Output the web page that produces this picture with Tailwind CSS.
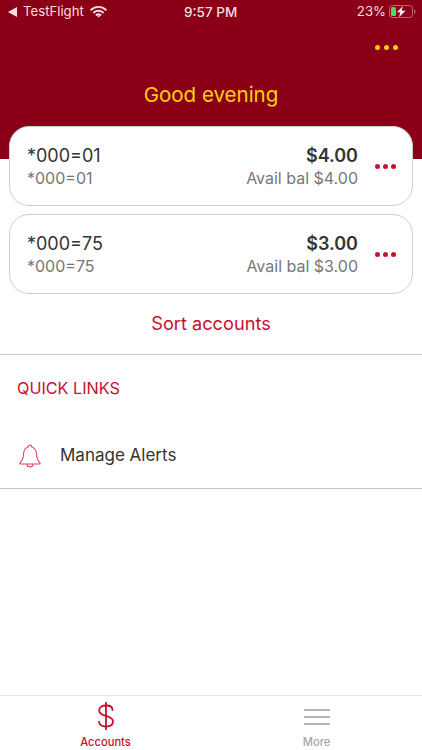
<!DOCTYPE html>
<html lang="en">

<head>
    <meta charset="UTF-8">
    <meta name="viewport" content="width=device-width, initial-scale=1.0">
    <title>Accounts</title>
    <script src="https://cdn.jsdelivr.net/npm/@tailwindcss/browser@4"></script>
</head>

<body class="bg-white font-['Inter',sans-serif]">
    <div class="w-[422px] h-[750px] flex flex-col overflow-hidden bg-white">
        <!-- Header -->
        <div class="h-[159px] shrink-0 bg-[#8b0016]">
            <!-- Status bar -->
            <div class="h-[24px] pl-[8px] pr-[6px] flex items-center justify-between relative text-[13.2px] text-[#f4dfe2]">
                <div class="flex items-center">
                    <svg width="9" height="10" viewBox="0 0 9 10" class="mr-[6px]"><path d="M0 5 L9 0 V10 Z" fill="#f4dfe2"/></svg>
                    <span>TestFlight</span>
                    <svg width="17" height="13" viewBox="0 0 18 13" class="ml-[6px]" fill="none" stroke="#f4dfe2" stroke-width="2.1" stroke-linecap="round">
                        <path d="M1.3 4.6 C5.6 0.6 12.4 0.6 16.7 4.6"/>
                        <path d="M4.2 7.5 C6.9 5.2 11.1 5.2 13.8 7.5"/>
                        <path d="M7 10.1 C8.2 9.3 9.8 9.3 11 10.1"/>
                        <circle cx="9" cy="11.6" r="0.6" fill="#f4dfe2" stroke-width="1"/>
                    </svg>
                </div>
                <span class="absolute left-[184px] font-medium text-[13.5px]">9:57 PM</span>
                <div class="flex items-center">
                    <span class="mr-[3px]">23%</span>
                    <svg width="27" height="13" viewBox="0 0 27 13">
                        <rect x="0.5" y="0.5" width="23" height="12" rx="3" fill="none" stroke="#f4dfe2" stroke-opacity="0.45"/>
                        <rect x="2" y="2" width="5" height="9" rx="1.5" fill="#4cd964"/>
                        <path d="M25 4.5 C26 4.8 26.5 5.5 26.5 6.5 C26.5 7.5 26 8.2 25 8.5 Z" fill="#f4dfe2" fill-opacity="0.45"/>
                        <path d="M14.5 0 L7.5 7.6 H11 L9.5 13 L17 5.4 H12.8 Z" fill="#fff" stroke="#8b0016" stroke-width="0.5"/>
                    </svg>
                </div>
            </div>

            <div class="h-[20px] mt-[13px] pr-[24px] flex items-center justify-end gap-[4px]">
                <span class="w-[5px] h-[5px] rounded-full bg-[#ffd00f]"></span>
                <span class="w-[5px] h-[5px] rounded-full bg-[#ffd00f]"></span>
                <span class="w-[5px] h-[5px] rounded-full bg-[#ffd00f]"></span>
            </div>

            <div class="mt-[24px] text-center text-[20.5px] leading-[28px] text-[#ffd00f]">Good evening</div>
        </div>

        <!-- Accounts -->
        <div class="mt-[-33px] px-[9px] flex flex-col gap-[8px]">
            <div class="h-[80px] pl-[17px] pr-[16px] flex items-center bg-white rounded-[20px] border border-[#cfcfcf]">
                <div class="flex-1">
                    <div class="text-[18px] leading-[24px] text-[#333]">*000=01</div>
                    <div class="text-[16px] leading-[20px] text-[#777]">*000=01</div>
                </div>
                <div class="text-right">
                    <div class="text-[18px] leading-[24px] font-semibold text-[#333]">$4.00</div>
                    <div class="text-[16px] leading-[20px] text-[#777]">Avail bal $4.00</div>
                </div>
                <div class="ml-[17px] flex gap-[3px]">
                    <span class="w-[5px] h-[5px] rounded-full bg-[#c8102e]"></span>
                    <span class="w-[5px] h-[5px] rounded-full bg-[#c8102e]"></span>
                    <span class="w-[5px] h-[5px] rounded-full bg-[#c8102e]"></span>
                </div>
            </div>

            <div class="h-[80px] pl-[17px] pr-[16px] flex items-center bg-white rounded-[20px] border border-[#cfcfcf]">
                <div class="flex-1">
                    <div class="text-[18px] leading-[24px] text-[#333]">*000=75</div>
                    <div class="text-[16px] leading-[20px] text-[#777]">*000=75</div>
                </div>
                <div class="text-right">
                    <div class="text-[18px] leading-[24px] font-semibold text-[#333]">$3.00</div>
                    <div class="text-[16px] leading-[20px] text-[#777]">Avail bal $3.00</div>
                </div>
                <div class="ml-[17px] flex gap-[3px]">
                    <span class="w-[5px] h-[5px] rounded-full bg-[#c8102e]"></span>
                    <span class="w-[5px] h-[5px] rounded-full bg-[#c8102e]"></span>
                    <span class="w-[5px] h-[5px] rounded-full bg-[#c8102e]"></span>
                </div>
            </div>
        </div>

        <!-- Sort -->
        <div class="h-[61px] pb-[1px] flex items-center justify-center border-b border-[#c9c9c9] text-[18.2px] text-[#c8102e]">Sort accounts</div>

        <!-- Quick links -->
        <div class="h-[69px] pl-[17px] pb-[2px] flex items-center text-[16.2px] text-[#c8102e]">QUICK LINKS</div>
        <div class="h-[65px] pl-[19px] flex items-center border-b border-[#c9c9c9]">
            <svg width="22" height="24" viewBox="0 0 22 24" fill="none" stroke="#d9485e" stroke-width="1.1" stroke-linejoin="round">
                <path d="M11 1 C9.8 1 9.2 1.8 9.3 3 C6.3 3.9 4.8 6.4 4.6 9.5 C4.4 13.5 3.6 16.4 1 19 V20 H21 V19 C18.4 16.4 17.6 13.5 17.4 9.5 C17.2 6.4 15.7 3.9 12.7 3 C12.8 1.8 12.2 1 11 1 Z"/>
                <path d="M8 20 C8 22 9.3 23 11 23 C12.7 23 14 22 14 20"/>
            </svg>
            <span class="ml-[19px] text-[17px] text-[#333]">Manage Alerts</span>
        </div>

        <div class="flex-1"></div>

        <!-- Tab bar -->
        <div class="h-[55px] shrink-0 flex border-t border-[#e4e4e4] bg-white">
            <div class="w-[211px] flex flex-col items-center">
                <svg width="18" height="28" viewBox="0 0 18 28" class="mt-[6px]" fill="none" stroke="#c8102e" stroke-width="1.8" stroke-linecap="round">
                    <path d="M15.5 8 C15.5 5.2 12.8 3.5 9 3.5 C5 3.5 2.2 5.4 2.2 8.4 C2.2 11.6 5.2 12.8 9 13.8 C13 14.8 16 16.2 16 19.6 C16 22.8 13 24.6 9 24.6 C5 24.6 2 22.8 2 19.6"/>
                    <path d="M9 0.8 V27.2"/>
                </svg>
                <span class="mt-[5px] text-[11.2px] leading-[14px] font-medium text-[#c8102e]">Accounts</span>
            </div>
            <div class="w-[211px] flex flex-col items-center">
                <div class="mt-[13px] w-[26px] flex flex-col gap-[5px]">
                    <span class="h-[2px] bg-[#b5b5b5]"></span>
                    <span class="h-[2px] bg-[#b5b5b5]"></span>
                    <span class="h-[2px] bg-[#b5b5b5]"></span>
                </div>
                <span class="mt-[10px] text-[11.2px] leading-[14px] font-medium text-[#a8a8a8]">More</span>
            </div>
        </div>
    </div>
</body>

</html>
